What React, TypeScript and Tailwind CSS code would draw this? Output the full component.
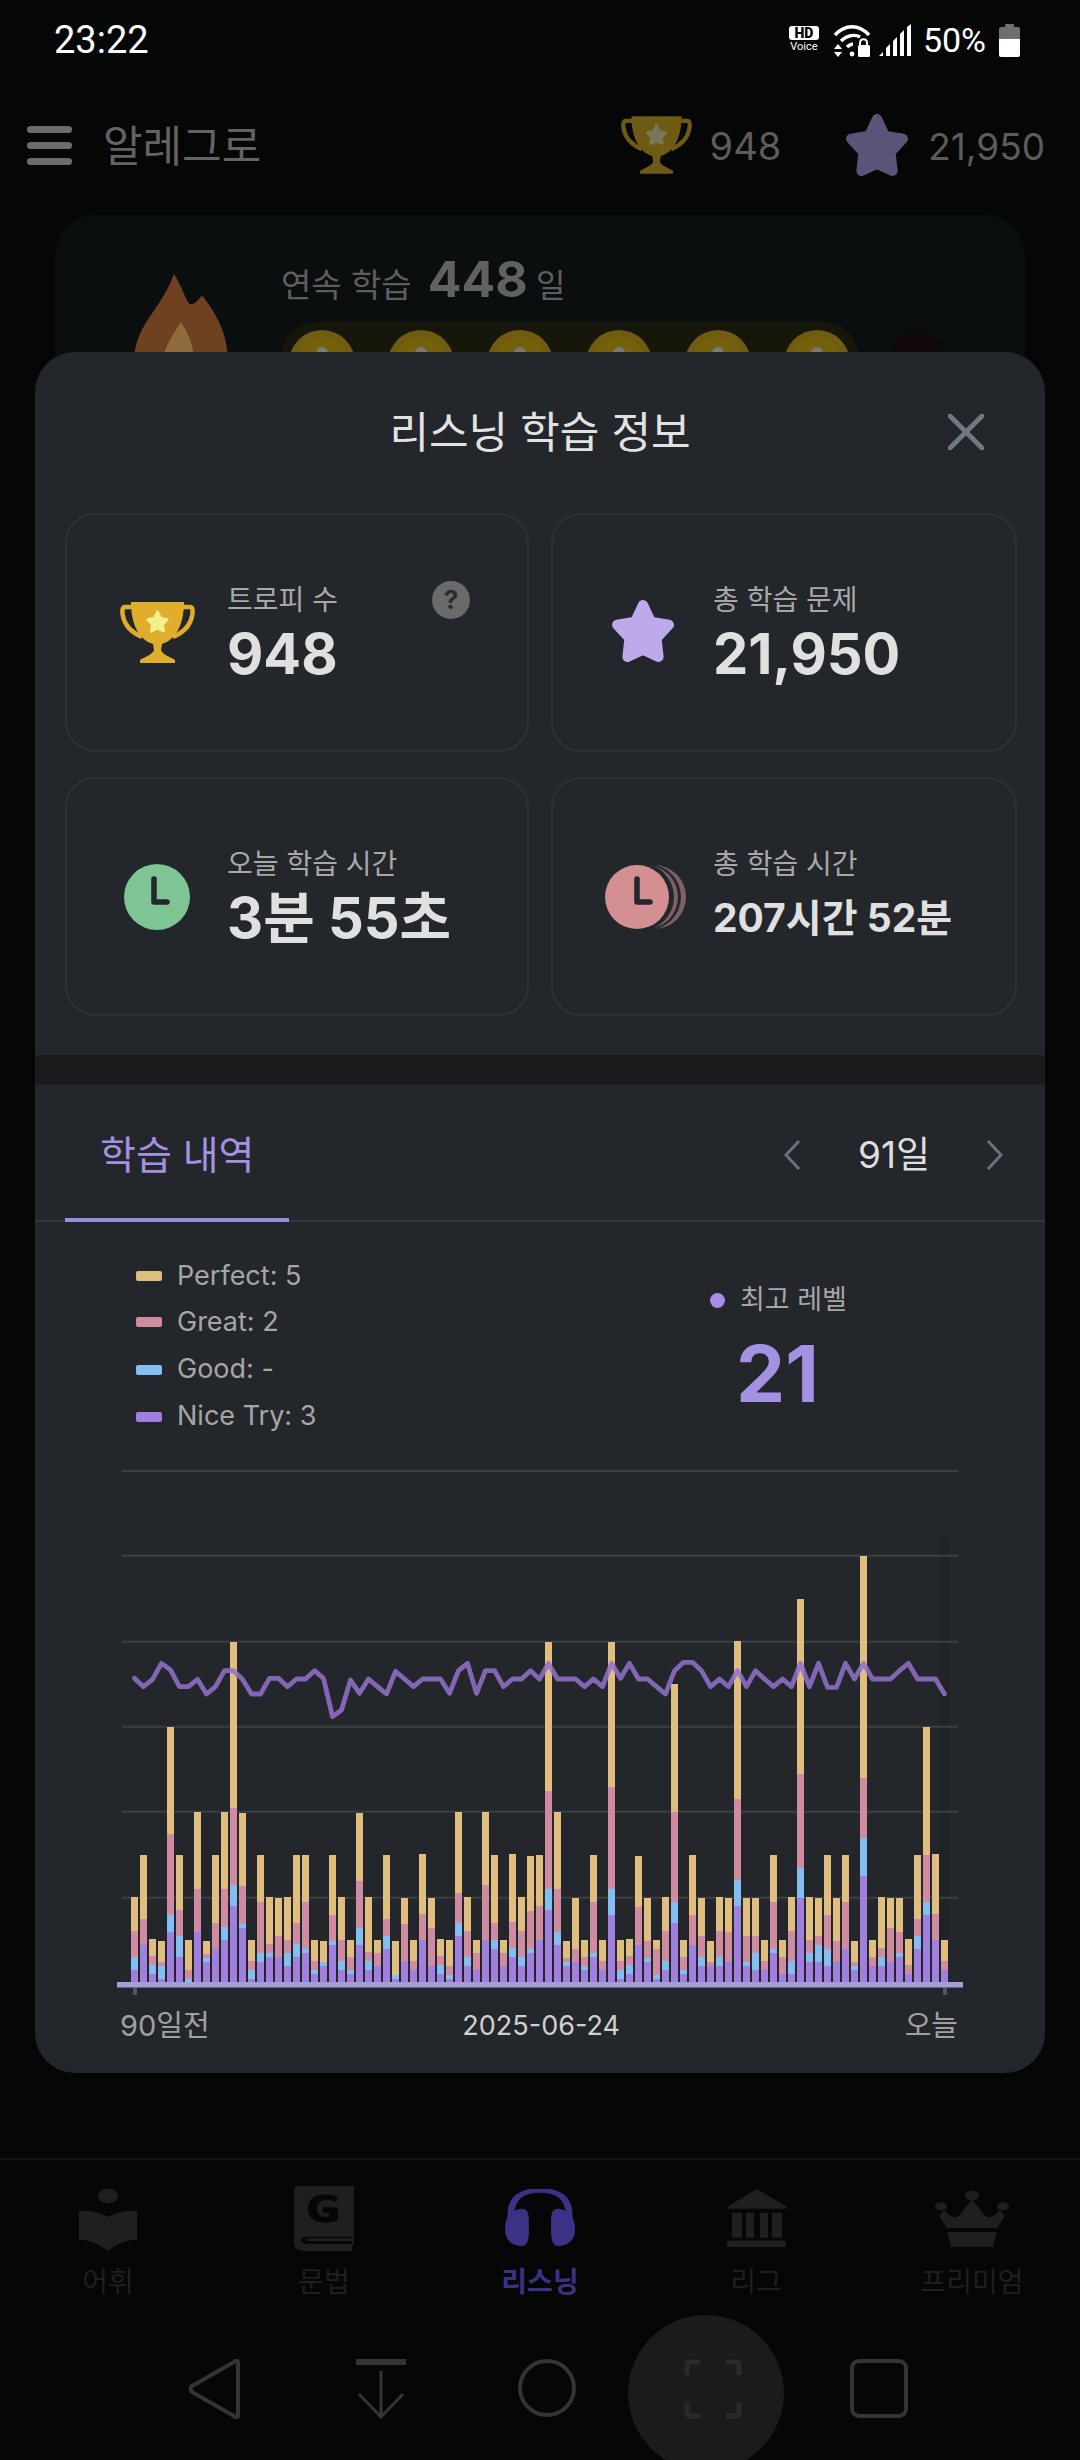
import React from "react";

// yellow, pink, blue and purple segment tops, in chart units (3 units = 1px, baseline 1327)
const bars = [
	[1071, 1173, 1251, 1290], [945, 1137, 1215, 1215], [1197, 1248, 1275, 1302], [1203, 1266, 1278, 1317],
	[561, 882, 1125, 1176], [945, 1110, 1188, 1251], [1200, 1290, 1317, 1327], [816, 1047, 1176, 1176],
	[1203, 1242, 1254, 1266], [945, 1149, 1227, 1227], [816, 1047, 1161, 1200], [306, 804, 1035, 1098],
	[819, 1038, 1152, 1164], [1200, 1263, 1290, 1317], [945, 1086, 1239, 1266], [1071, 1212, 1239, 1251],
	[1074, 1188, 1251, 1251], [1071, 1200, 1239, 1278], [945, 1149, 1212, 1251], [945, 1086, 1227, 1239],
	[1200, 1263, 1290, 1302], [1203, 1266, 1266, 1278], [945, 1125, 1203, 1215], [1071, 1200, 1263, 1290],
	[1200, 1251, 1290, 1302], [819, 1023, 1164, 1215], [1071, 1236, 1263, 1290], [1200, 1239, 1278, 1278],
	[945, 1137, 1188, 1227], [1203, 1305, 1305, 1317], [1074, 1152, 1266, 1266], [1200, 1263, 1290, 1290],
	[942, 1122, 1200, 1200], [1074, 1164, 1278, 1278], [1197, 1248, 1275, 1302], [1200, 1278, 1305, 1317],
	[816, 1059, 1149, 1188], [1071, 1173, 1251, 1278], [1200, 1239, 1290, 1290], [816, 1035, 1200, 1200],
	[945, 1149, 1200, 1227], [1200, 1239, 1278, 1278], [942, 1146, 1224, 1251], [1071, 1173, 1251, 1278],
	[948, 1113, 1227, 1239], [945, 1098, 1200, 1200], [306, 753, 1047, 1110], [816, 1047, 1176, 1215],
	[1203, 1254, 1266, 1278], [1074, 1227, 1266, 1266], [1200, 1251, 1278, 1290], [945, 1086, 1239, 1251],
	[1200, 1263, 1290, 1290], [306, 741, 1047, 1125], [1200, 1263, 1290, 1317], [1197, 1248, 1275, 1302],
	[948, 1101, 1215, 1215], [1074, 1203, 1254, 1266], [1200, 1227, 1305, 1317], [1071, 1173, 1263, 1290],
	[432, 816, 1086, 1149], [1200, 1251, 1290, 1302], [945, 1125, 1215, 1215], [1074, 1188, 1251, 1278],
	[1203, 1266, 1278, 1278], [1071, 1173, 1251, 1278], [1074, 1176, 1266, 1266], [303, 777, 1020, 1098],
	[1074, 1188, 1266, 1278], [1074, 1188, 1239, 1290], [1200, 1263, 1290, 1290], [945, 1086, 1227, 1239],
	[1200, 1251, 1302, 1302], [1071, 1173, 1263, 1302], [177, 702, 984, 1074], [1071, 1200, 1239, 1266],
	[1074, 1188, 1215, 1266], [945, 1125, 1227, 1278], [1074, 1203, 1266, 1266], [945, 1086, 1227, 1227],
	[1203, 1266, 1278, 1290], [48, 714, 894, 1008], [1200, 1251, 1278, 1278], [1071, 1224, 1251, 1278],
	[1074, 1164, 1266, 1266], [1074, 1176, 1239, 1251], [1197, 1275, 1302, 1302], [945, 1137, 1188, 1227],
	[561, 945, 1086, 1125], [942, 1122, 1200, 1200], [1200, 1263, 1290, 1290],
];

// highest level per day, same units
const levels = [
	415, 440, 418, 370, 390, 440, 440, 418, 462, 440, 392, 392, 418, 462, 462, 415, 415, 440, 417, 417, 392, 415, 530,
	510, 420, 460, 417, 440, 462, 394, 417, 440, 417, 417, 417, 460, 392, 370, 460, 392, 392, 440, 417, 417, 392, 417,
	370, 417, 417, 417, 440, 417, 440, 370, 415, 370, 417, 417, 440, 462, 392, 367, 367, 392, 440, 417, 440, 392, 440,
	392, 417, 440, 417, 440, 370, 440, 370, 442, 442, 370, 417, 370, 417, 417, 417, 392, 370, 417, 417, 417, 462,
];

const gridLines = [-207, 47, 305, 560, 815, 1073];
const segmentColors = ["#dfbe80", "#cf8b9f", "#84bef0", "#a17fde"];
const toY = (v: number) => 75 + v / 3;
const BASE = 1327;

const legend = [
	{ label: "Perfect: 5", color: "bg-[#dfbe80]", row: "h-[44px]" },
	{ label: "Great: 2", color: "bg-[#cf8b9f]", row: "h-[48px]" },
	{ label: "Good: -", color: "bg-[#84bef0]", row: "h-[47px]" },
	{ label: "Nice Try: 3", color: "bg-[#a17fde]", row: "h-[47px]" },
];

const Chart = () => (
	<svg width="846" height="535" viewBox="0 0 846 535" className="block ml-[82px]">
		<rect x="823" y="75" width="9" height="442" fill="#000" opacity="0.08" />
		{gridLines.map((v) => (
			<line key={v} x1="5" x2="841" y1={toY(v)} y2={toY(v)} stroke="#3d4043" strokeWidth="2" />
		))}
		{bars.map((bar, i) =>
			bar.map((top, s) => {
				const bottom = s === 3 ? BASE : bar[s + 1];
				if (bottom <= top) return null;
				return (
					<rect
						key={s}
						x={14 + 9 * i}
						y={toY(top)}
						width="7"
						height={(bottom - top) / 3}
						fill={segmentColors[s]}
					/>
				);
			})
		)}
		<polyline
			points={levels.map((v, i) => `${17.5 + 9 * i},${toY(v)}`).join(" ")}
			fill="none"
			stroke="#9272cc"
			strokeOpacity="0.85"
			strokeWidth="4.8"
			strokeLinejoin="round"
			strokeLinecap="round"
		/>
		<rect x="0" y="517" width="846" height="5.5" fill="#a59fd6" />
		<rect x="16" y="523" width="4" height="7" fill="#555" />
		<rect x="826" y="523" width="4" height="7" fill="#555" />
	</svg>
);

const Trophy = ({ cup, star, className }: { cup: string; star: string; className: string }) => (
	<svg viewBox="0 0 75 61" className={className}>
		<path
			d="M13 5H5C2 5 2 10 3 14C5 25 13 31 22 35M62 5H70C73 5 73 10 72 14C70 25 62 31 53 35"
			fill="none"
			stroke={cup}
			strokeWidth="4.5"
		/>
		<path
			d="M11 0H64C64 22 56 38 42 42L41 48C42 52 50 55 55 58V61H20V58C25 55 33 52 34 48L33 42C19 38 11 22 11 0Z"
			fill={cup}
		/>
		<polygon
			points="37.5,10 40.5,16.5 47,17.5 42.5,22.5 43.5,29 37.5,26 31.5,29 32.5,22.5 28,17.5 34.5,16.5"
			fill={star}
			stroke={star}
			strokeWidth="3"
			strokeLinejoin="round"
		/>
	</svg>
);

const Star = ({ color, className }: { color: string; className: string }) => (
	<svg viewBox="0 0 64 62" className={className}>
		<polygon
			points="32,6 39.5,22 57,25 45,38 47,56 32,49 17,56 19,38 7,25 24.5,22"
			fill={color}
			stroke={color}
			strokeWidth="10"
			strokeLinejoin="round"
		/>
	</svg>
);

const Clock = ({ color, className }: { color: string; className: string }) => (
	<svg viewBox="0 0 66 66" className={className}>
		<circle cx="33" cy="33" r="33" fill={color} />
		<path d="M30 15V38H43" fill="none" stroke="#23262a" strokeWidth="5.5" strokeLinecap="round" strokeLinejoin="round" />
	</svg>
);

const StackedClock = () => (
	<svg viewBox="0 0 82 66" className="w-[82px] h-[66px] ml-[5px]">
		<circle cx="49" cy="33" r="32" fill="#7f6064" />
		<circle cx="43" cy="33" r="33" fill="#23262a" />
		<circle cx="41" cy="33" r="32" fill="#7f6064" />
		<circle cx="35" cy="33" r="34" fill="#23262a" />
		<circle cx="32" cy="33" r="32" fill="#d48f92" />
		<path d="M32 15V38H45" fill="none" stroke="#23262a" strokeWidth="5.5" strokeLinecap="round" strokeLinejoin="round" />
	</svg>
);

const StatCard = ({
	icon,
	label,
	value,
	valueClass = "text-[56px] leading-[64px]",
	extra,
}: {
	icon: React.ReactNode;
	label: string;
	value: string;
	valueClass?: string;
	extra?: React.ReactNode;
}) => (
	<div className="relative h-[239px] rounded-[30px] border-2 border-[#2e3135] flex items-center">
		<div className="w-[160px] shrink-0 pl-[20px] flex justify-center">{icon}</div>
		<div className="flex flex-col">
			<span className="text-[28px] leading-[40px] text-[#a8a8a8]">{label}</span>
			<span className={`mt-[2px] font-bold text-[#e0e0e0] ${valueClass}`}>{value}</span>
		</div>
		{extra}
	</div>
);

const StatusBar = () => (
	<div className="h-[100px] flex items-start justify-between pl-[54px] pr-[60px] pt-[19px] font-['Roboto']">
		<span className="text-[38px] leading-[42px] text-white">23:22</span>
		<div className="flex items-center h-[36px] mt-[3px]">
			<div className="flex flex-col items-center w-[30px] mr-[14px]">
				<span className="bg-white text-black rounded-[3px] w-[30px] h-[14px] text-[14px] leading-[14px] font-black text-center">
					HD
				</span>
				<span className="text-white text-[11px] leading-[14px]">Voice</span>
			</div>
			<svg viewBox="0 0 38 33" className="w-[38px] h-[33px] mr-[8px]">
				<path d="M2 11C12 0 26 0 36 11" fill="none" stroke="#fff" strokeWidth="3.4" />
				<path d="M8 17C14 11 22 10 27 13" fill="none" stroke="#fff" strokeWidth="3.4" />
				<path d="M14 23C16 21 18 20 20 20" fill="none" stroke="#fff" strokeWidth="3.4" />
				<circle cx="19" cy="30" r="2.4" fill="#fff" />
				<path d="M5 20L1 25H9ZM5 33L1 28H9Z" fill="#fff" />
				<path d="M27 22V19C27 14 34 14 34 19V22" fill="none" stroke="#fff" strokeWidth="2" />
				<rect x="25" y="21" width="12" height="12" rx="1.5" fill="#fff" />
			</svg>
			<svg viewBox="0 0 33 32" className="w-[33px] h-[32px] mr-[11px]">
				<path d="M0 32L4 28V32ZM7 32V24L11 20V32ZM14 32V17L18 13V32ZM21 32V10L25 6V32ZM28 32V3L32 0V32Z" fill="#fff" />
			</svg>
			<span className="text-[34px] leading-[36px] text-white mr-[13px]">50%</span>
			<div className="w-[21px] h-[33px] flex flex-col items-center">
				<div className="w-[9px] h-[3px] bg-[#6f6f6f] rounded-t-[1px]" />
				<div className="w-[21px] h-[12px] bg-[#6f6f6f] rounded-t-[2px]" />
				<div className="w-[21px] h-[18px] bg-white rounded-b-[2px]" />
			</div>
		</div>
	</div>
);

const Header = () => (
	<header className="h-[90px] flex items-center pl-[27px] pr-[35px]">
		<div className="flex flex-col gap-[9px] w-[45px]">
			<div className="h-[7px] rounded-full bg-[#6b6b6b]" />
			<div className="h-[7px] rounded-full bg-[#6b6b6b]" />
			<div className="h-[7px] rounded-full bg-[#6b6b6b]" />
		</div>
		<span className="ml-[31px] pt-[3px] text-[43px] text-[#636363] mr-auto">알레그로</span>
		<Trophy cup="#6e5a12" star="#77785a" className="w-[71px] h-[58px]" />
		<span className="ml-[18px] pt-[3px] text-[38px] text-[#5c5c5c]">948</span>
		<Star color="#5b5478" className="ml-[63px] w-[66px] h-[64px]" />
		<span className="ml-[18px] pt-[3px] text-[37px] text-[#5c5c5c]">21,950</span>
	</header>
);

const StreakCard = () => (
	<div className="relative mt-[25px] mx-[55px] h-[300px] rounded-[40px] bg-[#0b0e0f] flex pl-[79px] pt-[59px]">
		<svg viewBox="0 0 94 90" className="w-[94px] h-[90px] shrink-0">
			<path d="M40 0C55 25 52 35 62 28C68 22 68 20 70 24C90 50 94 70 94 90H0C0 50 25 40 40 0Z" fill="#6e4220" />
			<path d="M47 48C58 65 60 78 60 90H28C28 78 36 65 47 48Z" fill="#8e6c3d" />
		</svg>
		<div className="ml-[53px] -mt-[32px]">
			<div className="flex items-baseline h-[60px]">
				<span className="text-[33px] text-[#5e5e5e]">연속 학습</span>
				<span className="ml-[16px] text-[50px] font-bold text-[#616161]">448</span>
				<span className="ml-[8px] text-[32px] text-[#5e5e5e]">일</span>
			</div>
			<div className="mt-[20px] w-[578px] h-[100px] rounded-[36px] bg-[#17160a] flex gap-[33px] pl-[8px] pt-[8px]">
				{[0, 1, 2, 3, 4, 5].map((i) => (
					<div key={i} className="w-[66px] h-[66px] rounded-full bg-[#6f5c10] flex items-center justify-center">
						<div className="w-[52px] h-[52px] rounded-full bg-[#75600c] flex justify-center pt-[10px]">
							<div className="w-[12px] h-[16px] rounded-t-full bg-[#7a7a70]" />
						</div>
					</div>
				))}
			</div>
		</div>
		<div className="absolute left-[833px] top-[118px] w-[60px] h-[60px] rounded-full bg-[#120709]" />
	</div>
);

const navItems = [
	{
		label: "어휘",
		box: "0 0 60 92",
		size: "w-[60px] h-[65px]",
		icon: (
			<>
				<circle cx="30" cy="14" r="10" />
				<path d="M1 36C10 33 22 38 30 44C38 38 50 33 59 36V76C50 76 38 82 30 92C22 82 10 76 1 76Z" />
			</>
		),
	},
	{
		label: "문법",
		box: "0 0 60 92",
		size: "w-[60px] h-[65px]",
		icon: (
			<path
				fillRule="evenodd"
				d="M6 0H60V84H58V92H12C4 92 0 88 0 80V6C0 3 3 0 6 0ZM8 74C6 78 8 82 13 82H58V78H14C11 78 11 76 14 74H58V72H10ZM30 12C20 12 14 20 14 32C14 44 20 52 31 52C36 52 40 50 44 48V30H29V38H35V43C28 46 23 40 23 32C23 24 27 19 33 19C37 19 39 21 41 23L44 16C41 13 36 12 30 12Z"
			/>
		),
	},
	{
		label: "리스닝",
		active: true,
		box: "0 0 70 88",
		size: "w-[70px] h-[58px]",
		icon: (
			<>
				<path d="M6 52V38C6 12 18 2 35 2C52 2 64 12 64 38V52" fill="none" stroke="currentColor" strokeWidth="7" />
				<path d="M16 30C24 30 24 38 24 60C24 82 22 88 14 86C4 84 0 74 0 60C0 44 6 32 16 30Z" />
				<path d="M54 30C46 30 46 38 46 60C46 82 48 88 56 86C66 84 70 74 70 60C70 44 64 32 54 30Z" />
			</>
		),
	},
	{
		label: "리그",
		box: "0 0 59 88",
		size: "w-[59px] h-[58px]",
		icon: (
			<>
				<path d="M30 0L59 26V30H1V26Z" />
				<path d="M5 36H15V74H5ZM19 36H27V74H19ZM33 36H41V74H33ZM45 36H55V74H45Z" />
				<rect x="0" y="78" width="59" height="10" rx="2" />
			</>
		),
	},
	{
		label: "프리미엄",
		box: "0 0 74 84",
		size: "w-[74px] h-[57px]",
		icon: (
			<>
				<circle cx="37" cy="8" r="7" />
				<circle cx="6" cy="24" r="6" />
				<circle cx="68" cy="24" r="6" />
				<path d="M37 14L49 36C53 44 60 40 64 30L70 38L62 56H12L4 38L10 30C14 40 21 44 25 36Z" />
				<path d="M12 62H62L58 84H16Z" />
			</>
		),
	},
];

const BottomNav = () => (
	<nav className="border-t-2 border-[#131414] h-[152px] grid grid-cols-5 shrink-0">
		{navItems.map((item) => (
			<div
				key={item.label}
				className={`flex flex-col items-center pt-[25px] ${item.active ? "text-[#3b3285]" : "text-[#1f1f20]"}`}
			>
				<div className="h-[66px] flex items-center">
					<svg viewBox={item.box} preserveAspectRatio="none" fill="currentColor" className={item.size}>
						{item.icon}
					</svg>
				</div>
				<span className={`mt-[11px] text-[28px] leading-[40px] ${item.active ? "font-bold" : ""}`}>{item.label}</span>
			</div>
		))}
	</nav>
);

const SoftKeys = () => (
	<div className="flex-1 flex items-start pl-[132px] pt-[49px] text-[#333435]">
		<div className="w-[166px] flex justify-center">
			<svg viewBox="0 0 54 60" fill="none" stroke="currentColor" strokeWidth="4" strokeLinejoin="round" className="w-[54px] h-[60px]">
				<path d="M50 3V57C50 59 47 59 46 57L4 33C2 31 2 29 4 27L46 3C48 1 50 1 50 3Z" />
			</svg>
		</div>
		<div className="w-[166px] flex justify-center">
			<svg viewBox="0 0 50 60" fill="none" stroke="currentColor" strokeWidth="3" className="w-[50px] h-[60px]">
				<path d="M0 3H50" strokeWidth="6" strokeLinecap="round" />
				<path d="M25 12V58M3 35L25 58L47 35" />
			</svg>
		</div>
		<div className="w-[166px] flex justify-center">
			<div className="w-[58px] h-[58px] rounded-full border-4 border-[#333435]" />
		</div>
		<div className="w-[166px] relative flex justify-center text-[#2a2a2b]">
			<div className="absolute left-[-2px] top-[-44px] w-[156px] h-[156px] rounded-full bg-[#1b1b1c]" />
			<svg viewBox="0 0 58 60" fill="none" stroke="currentColor" strokeWidth="5" className="relative w-[58px] h-[60px]">
				<path d="M16 3H6C4 3 3 4 3 6V16M42 3H52C54 3 55 4 55 6V16M16 57H6C4 57 3 56 3 54V44M42 57H52C54 57 55 56 55 54V44" />
			</svg>
		</div>
		<div className="w-[166px] flex justify-center">
			<div className="w-[58px] h-[59px] rounded-[9px] border-4 border-[#333435]" />
		</div>
	</div>
);

const ListeningInfo = () => (
	<div className="absolute left-[35px] top-[352px] w-[1010px] h-[1721px] rounded-[40px] bg-[#23262a] flex flex-col">
		<div className="relative h-[161px] flex items-start justify-center pt-[52px]">
			<h2 className="text-[43px] leading-[56px] text-[#e2e2e2]">리스닝 학습 정보</h2>
			<svg viewBox="0 0 36 36" className="absolute left-[913px] top-[62px] w-[36px] h-[36px]">
				<path d="M2 2L34 34M34 2L2 34" stroke="#70787f" strokeWidth="5" strokeLinecap="round" />
			</svg>
		</div>
		<div className="grid grid-cols-[464px_466px] gap-x-[22px] gap-y-[25px] px-[30px]">
			<StatCard
				icon={<Trophy cup="#e0ae2c" star="#f5f08c" className="w-[75px] h-[61px]" />}
				label="트로피 수"
				value="948"
				extra={
					<span className="absolute left-[365px] top-[66px] w-[38px] h-[38px] rounded-full bg-[#6a6a6a] text-[#2a2c2f] text-[26px] leading-[38px] font-bold text-center">
						?
					</span>
				}
			/>
			<StatCard
				icon={<Star color="#bcaaea" className="w-[66px] h-[64px] mb-[4px]" />}
				label="총 학습 문제"
				value="21,950"
			/>
			<StatCard
				icon={<Clock color="#7fc495" className="w-[66px] h-[66px]" />}
				label="오늘 학습 시간"
				value="3분 55초"
			/>
			<StatCard
				icon={<StackedClock />}
				label="총 학습 시간"
				value="207시간 52분"
				valueClass="text-[39px] leading-[64px]"
			/>
		</div>
		<div className="mt-[39px] h-[30px] bg-[#191b1d]" />
		<div className="relative h-[137px] border-b-2 border-[#33363a] flex items-start pt-[44px]">
			<span className="ml-[65px] text-[39px] leading-[52px] text-[#a491e2]">학습 내역</span>
			<div className="absolute left-[30px] bottom-[-2px] w-[224px] h-[4px] bg-[#9c8ae0]" />
			<div className="ml-auto mr-[41px] flex items-center h-[52px]">
				<svg viewBox="0 0 18 32" fill="none" stroke="#69717a" strokeWidth="3" className="w-[18px] h-[32px]">
					<path d="M16 2L3 16L16 30" />
				</svg>
				<span className="ml-[57px] mr-[56px] text-[37px] text-[#dedede]">91일</span>
				<svg viewBox="0 0 18 32" fill="none" stroke="#69717a" strokeWidth="3" className="w-[18px] h-[32px]">
					<path d="M2 2L15 16L2 30" />
				</svg>
			</div>
		</div>
		<div className="h-[243px] flex">
			<div className="ml-[101px] w-[574px] pt-[32px]">
				{legend.map((item) => (
					<div key={item.label} className={`flex items-center ${item.row}`}>
						<div className={`w-[26px] h-[10px] rounded-[2px] ${item.color}`} />
						<span className="ml-[15px] text-[27px] text-[#a6a6a6]">{item.label}</span>
					</div>
				))}
			</div>
			<div className="pt-[63px]">
				<div className="flex items-center h-[30px]">
					<div className="w-[15px] h-[15px] rounded-full bg-[#a98ce8]" />
					<span className="ml-[15px] text-[27px] text-[#a6a6a6]">최고 레벨</span>
				</div>
				<div className="ml-[26px] mt-[15px] text-[78px] leading-[88px] font-bold text-[#a491e2]">21</div>
			</div>
		</div>
		<Chart />
		<div className="ml-[85px] w-[838px] flex justify-between items-center text-[29px] leading-[40px] mt-[6px]">
			<span className="text-[#a0a0a0]">90일전</span>
			<span className="mr-[32px] text-[27px] text-[#d0d0d0]">2025-06-24</span>
			<span className="text-[#a0a0a0]">오늘</span>
		</div>
	</div>
);

export default function App() {
	return (
		<div className="relative w-[1080px] h-[2460px] overflow-hidden bg-[#050606] font-['Inter','Noto_Sans_CJK_KR',sans-serif] flex flex-col">
			<StatusBar />
			<Header />
			<StreakCard />
			<div className="flex-1" />
			<BottomNav />
			<div className="h-[150px] flex">
				<SoftKeys />
			</div>
			<ListeningInfo />
		</div>
	);
}
